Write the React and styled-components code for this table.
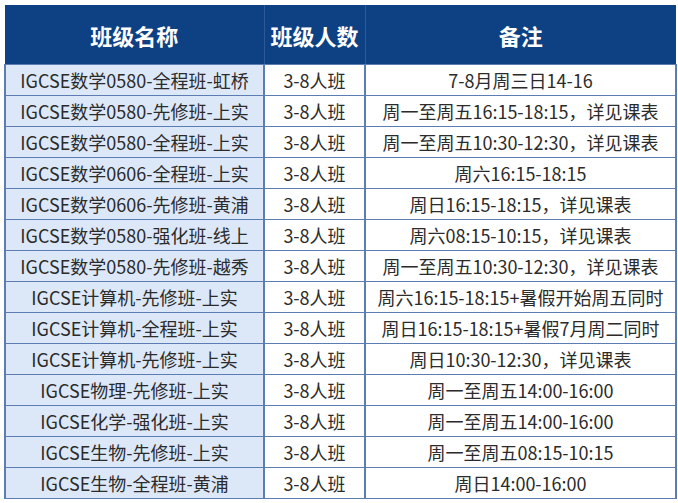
import React from 'react';
import styled, { createGlobalStyle } from 'styled-components';

const GlobalStyle = createGlobalStyle`
  html, body {
    margin: 0;
    padding: 0;
    background: #ffffff;
  }
  body {
    font-family: "Noto Sans CJK SC", "Noto Sans", sans-serif;
  }
`;

const Page = styled.div`
  padding: 5px 3px 0 4px;
`;

const Table = styled.table`
  width: 671px;
  border-collapse: collapse;
  table-layout: fixed;
  color: #2b2b2b;
`;

const HeadCell = styled.th`
  height: 59px;
  padding: 0;
  background: #0d4184;
  color: #ffffff;
  font-size: 22px;
  font-weight: 700;
  text-align: center;
  border-right: 1px solid #2e5a94;
  &:last-child {
    border-right: none;
  }
`;

const Cell = styled.td`
  height: 30px;
  padding: 0;
  font-size: 18px;
  line-height: 30px;
  text-align: center;
  white-space: nowrap;
  background: ${p => (p.$shaded ? '#dce8f8' : '#ffffff')};
  border: 1px solid #5b7db4;
  border-width: 1px 2px 1px 1px;
  &:first-child {
    border-left-width: 2px;
  }
`;

const rows = [
  ['IGCSE数学0580-全程班-虹桥', '7-8月周三日14-16'],
  ['IGCSE数学0580-先修班-上实', '周一至周五16:15-18:15，详见课表'],
  ['IGCSE数学0580-全程班-上实', '周一至周五10:30-12:30，详见课表'],
  ['IGCSE数学0606-全程班-上实', '周六16:15-18:15'],
  ['IGCSE数学0606-先修班-黄浦', '周日16:15-18:15，详见课表'],
  ['IGCSE数学0580-强化班-线上', '周六08:15-10:15，详见课表'],
  ['IGCSE数学0580-先修班-越秀', '周一至周五10:30-12:30，详见课表'],
  ['IGCSE计算机-先修班-上实', '周六16:15-18:15+暑假开始周五同时'],
  ['IGCSE计算机-全程班-上实', '周日16:15-18:15+暑假7月周二同时'],
  ['IGCSE计算机-先修班-上实', '周日10:30-12:30，详见课表'],
  ['IGCSE物理-先修班-上实', '周一至周五14:00-16:00'],
  ['IGCSE化学-强化班-上实', '周一至周五14:00-16:00'],
  ['IGCSE生物-先修班-上实', '周一至周五08:15-10:15'],
  ['IGCSE生物-全程班-黄浦', '周日14:00-16:00'],
];

export default function App() {
  return (
    <Page>
      <GlobalStyle />
      <Table>
        <colgroup>
          <col style={{ width: 259 }} />
          <col style={{ width: 101 }} />
          <col style={{ width: 311 }} />
        </colgroup>
        <thead>
          <tr>
            <HeadCell>班级名称</HeadCell>
            <HeadCell>班级人数</HeadCell>
            <HeadCell>备注</HeadCell>
          </tr>
        </thead>
        <tbody>
          {rows.map(([name, note], i) => (
            <tr key={i}>
              <Cell $shaded>{name}</Cell>
              <Cell>3-8人班</Cell>
              <Cell>{note}</Cell>
            </tr>
          ))}
        </tbody>
      </Table>
    </Page>
  );
}
